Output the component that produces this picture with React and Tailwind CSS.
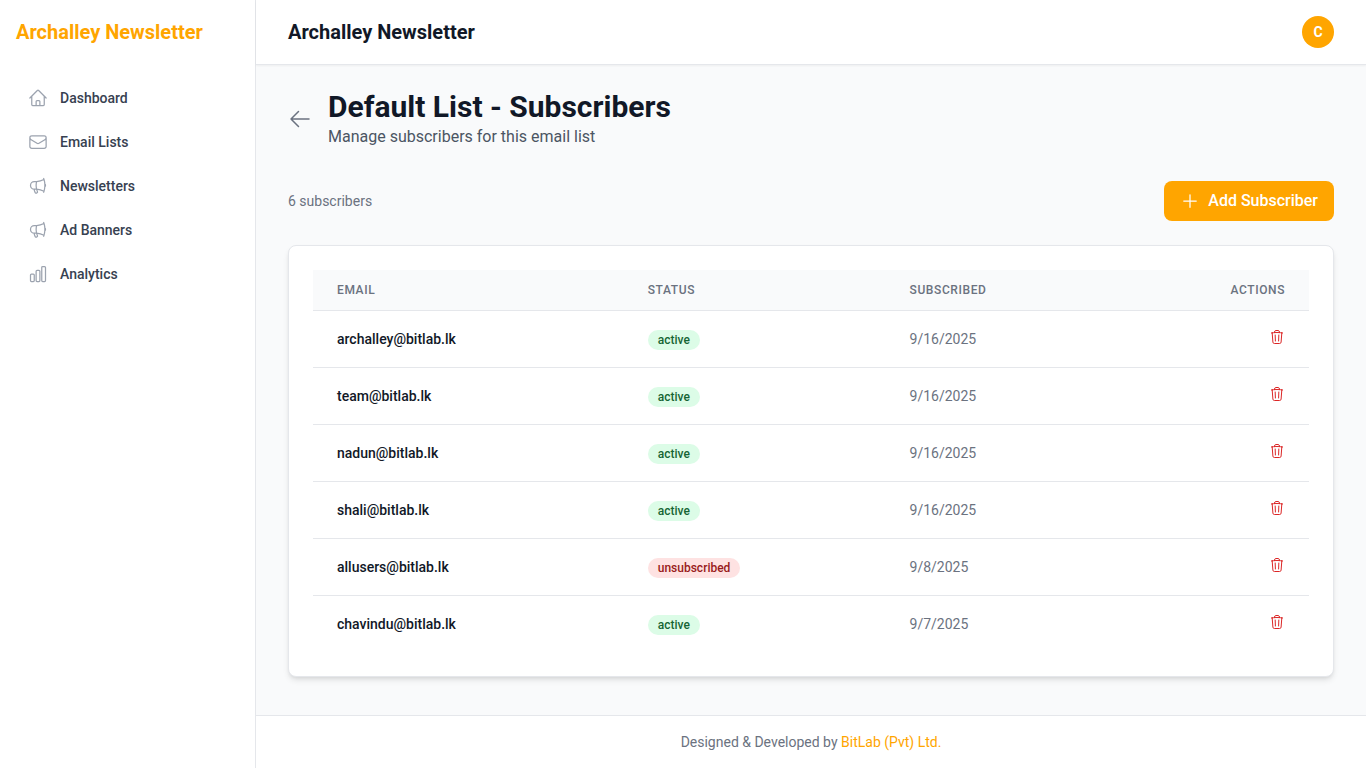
import {
  HiOutlineArrowLeft,
  HiOutlineChartBar,
  HiOutlineEnvelope,
  HiOutlineHome,
  HiOutlineMegaphone,
  HiOutlinePlus,
  HiOutlineTrash,
} from "react-icons/hi2";

const navItems = [
  { label: "Dashboard", icon: HiOutlineHome },
  { label: "Email Lists", icon: HiOutlineEnvelope },
  { label: "Newsletters", icon: HiOutlineMegaphone },
  { label: "Ad Banners", icon: HiOutlineMegaphone },
  { label: "Analytics", icon: HiOutlineChartBar },
];

const subscribers = [
  { email: "archalley@bitlab.lk", status: "active", date: "9/16/2025" },
  { email: "team@bitlab.lk", status: "active", date: "9/16/2025" },
  { email: "nadun@bitlab.lk", status: "active", date: "9/16/2025" },
  { email: "shali@bitlab.lk", status: "active", date: "9/16/2025" },
  { email: "allusers@bitlab.lk", status: "unsubscribed", date: "9/8/2025" },
  { email: "chavindu@bitlab.lk", status: "active", date: "9/7/2025" },
];

const statusStyles = {
  active: "bg-[#dcfce7] text-[#166534]",
  unsubscribed: "bg-[#fee2e2] text-[#991b1b]",
};

function Sidebar() {
  return (
    <aside className="w-64 shrink-0 border-r border-[#e5e7eb] bg-white">
      <div className="flex h-16 items-center px-4">
        <span className="text-xl font-bold text-[#ffa500]">Archalley Newsletter</span>
      </div>
      <nav className="flex flex-col gap-2 p-4">
        {navItems.map(({ label, icon: Icon }) => (
          <a
            key={label}
            href="#"
            className="flex items-center gap-3 rounded-md px-3 py-2 text-sm font-medium text-[#374151] hover:bg-gray-50"
          >
            <Icon className="size-5 text-[#9ca3af]" aria-hidden="true" />
            {label}
          </a>
        ))}
      </nav>
    </aside>
  );
}

function StatusBadge({ status }) {
  return (
    <span
      className={`inline-flex items-center rounded-full px-2.5 py-0.5 text-xs font-medium ${statusStyles[status]}`}
    >
      {status}
    </span>
  );
}

function SubscriberTable() {
  return (
    <div className="rounded-lg border border-[#e5e7eb] bg-white p-6 shadow-md">
      <table className="w-full">
        <thead className="bg-[#f9fafb]">
          <tr className="border-b border-[#e5e7eb] text-left text-xs font-medium tracking-wider text-[#6b7280] uppercase">
            <th scope="col" className="px-6 py-3 font-medium">Email</th>
            <th scope="col" className="px-6 py-3 font-medium">Status</th>
            <th scope="col" className="px-6 py-3 font-medium">Subscribed</th>
            <th scope="col" className="px-6 py-3 text-right font-medium">Actions</th>
          </tr>
        </thead>
        <tbody className="divide-y divide-[#e5e7eb]">
          {subscribers.map(({ email, status, date }) => (
            <tr key={email}>
              <td className="px-6 py-4 text-sm font-medium whitespace-nowrap text-[#111827]">{email}</td>
              <td className="px-6 py-4 whitespace-nowrap">
                <StatusBadge status={status} />
              </td>
              <td className="px-6 py-4 text-sm whitespace-nowrap text-[#6b7280]">{date}</td>
              <td className="px-6 py-4 text-right text-sm font-medium whitespace-nowrap">
                <button type="button" aria-label={`Delete ${email}`} className="text-[#dc2626] hover:text-red-900">
                  <HiOutlineTrash className="size-4" aria-hidden="true" />
                </button>
              </td>
            </tr>
          ))}
        </tbody>
      </table>
    </div>
  );
}

export default function App() {
  return (
    <div className="flex min-h-screen bg-[#f9fafb] font-[Roboto,sans-serif]">
      <Sidebar />
      <div className="flex min-w-0 flex-1 flex-col">
        <header className="border-b border-[#e5e7eb] bg-white shadow-xs">
          <div className="flex h-16 items-center justify-between px-8">
            <span className="text-xl font-bold text-[#111827]">Archalley Newsletter</span>
            <button
              type="button"
              aria-label="Account menu"
              className="flex size-8 items-center justify-center rounded-full bg-[#ffa500] text-sm font-bold text-white"
            >
              C
            </button>
          </div>
        </header>

        <main className="flex-1 px-8 py-6">
          <div className="mb-8 flex items-center gap-4">
            <a href="#" aria-label="Back to email lists" className="text-[#6b7280] hover:text-gray-700">
              <HiOutlineArrowLeft className="size-6" aria-hidden="true" />
            </a>
            <div>
              <h1 className="text-3xl font-bold text-[#111827]">Default List - Subscribers</h1>
              <p className="text-[#4b5563]">Manage subscribers for this email list</p>
            </div>
          </div>

          <div className="mb-6 flex items-center justify-between">
            <p className="text-sm text-[#6b7280]">6 subscribers</p>
            <button
              type="button"
              className="flex items-center rounded-lg bg-[#ffa500] px-4 py-2 font-medium text-white hover:bg-orange-500"
            >
              <HiOutlinePlus className="mr-2 size-5" aria-hidden="true" />
              Add Subscriber
            </button>
          </div>

          <SubscriberTable />
        </main>

        <footer className="border-t border-[#e5e7eb] bg-white px-8 py-4 text-center text-sm text-[#6b7280]">
          Designed &amp; Developed by{" "}
          <a href="#" className="text-[#ffa500] hover:underline">BitLab (Pvt) Ltd.</a>
        </footer>
      </div>
    </div>
  );
}
